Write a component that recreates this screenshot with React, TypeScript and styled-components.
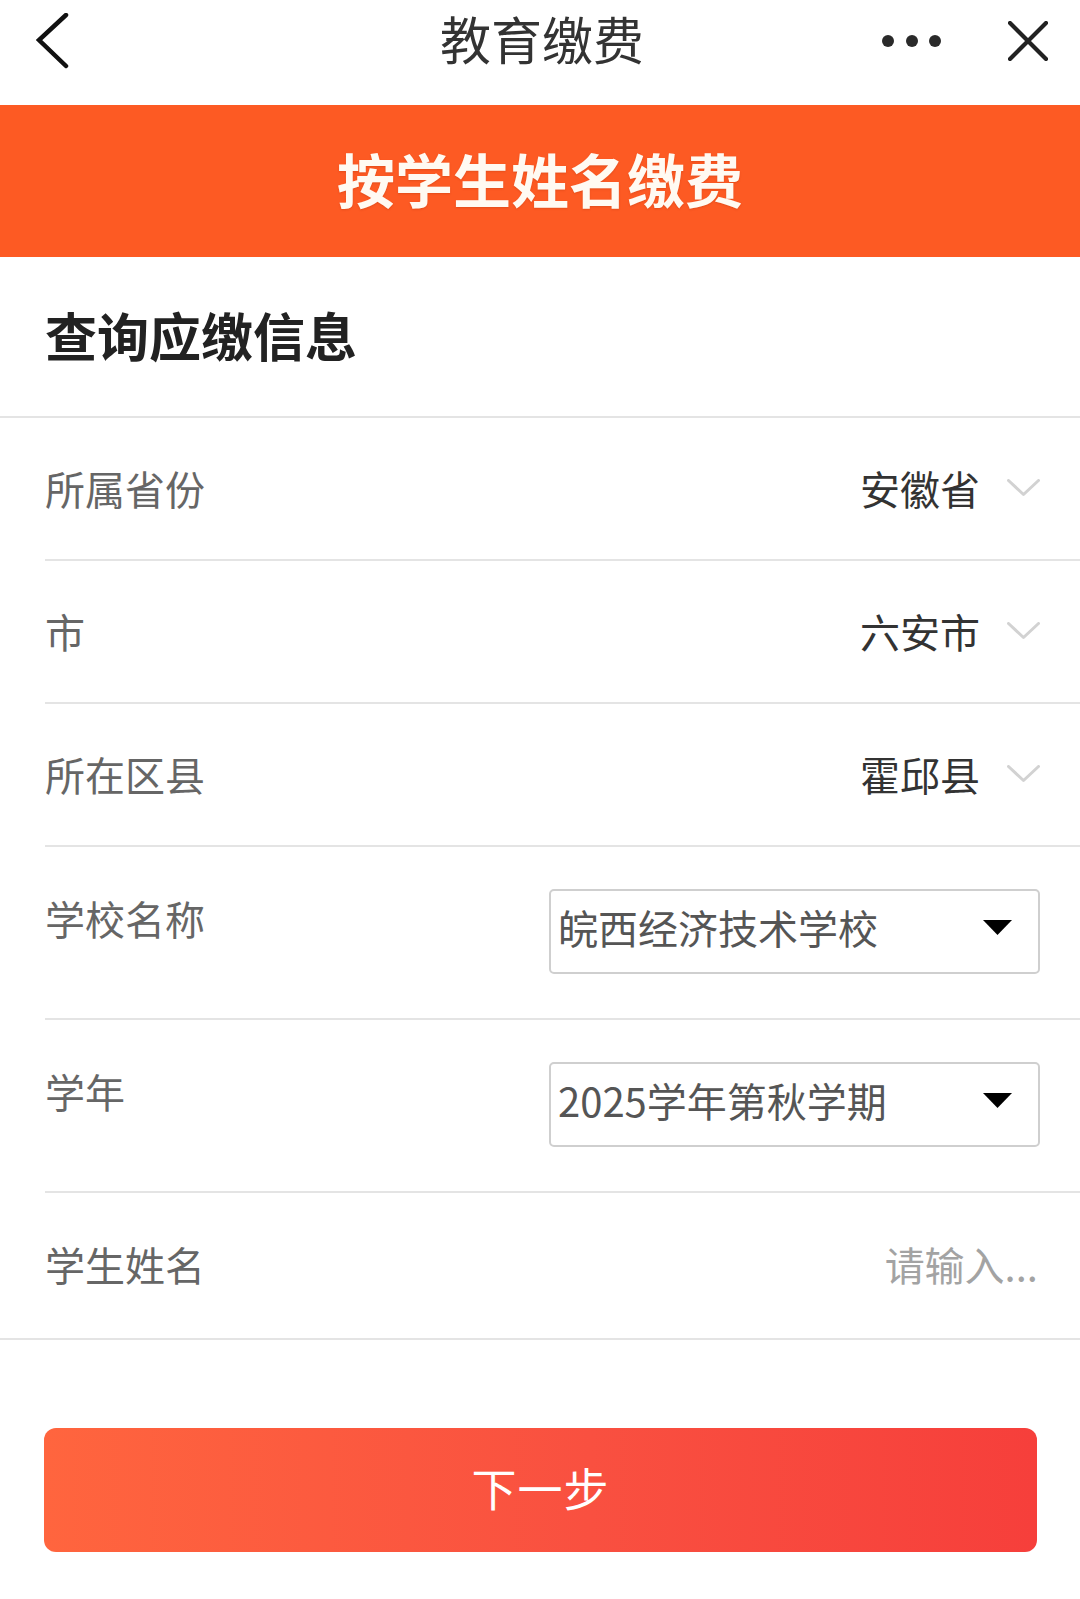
import React from "react";
import styled, { createGlobalStyle } from "styled-components";

const GlobalStyle = createGlobalStyle`
  html, body {
    margin: 0;
    padding: 0;
    background: #ffffff;
  }
  body {
    font-family: "Noto Sans CJK SC", "Noto Sans", "Liberation Sans", sans-serif;
    -webkit-font-smoothing: antialiased;
  }
  * { box-sizing: border-box; }
`;

const Page = styled.div`
  width: 1080px;
  min-height: 1599px;
  background: #ffffff;
  display: flex;
  flex-direction: column;
`;

const TopBar = styled.header`
  height: 105px;
  display: grid;
  grid-template-columns: 1fr auto 1fr;
  align-items: center;
  padding: 0 32px 0 36px;
  background: #ffffff;
`;

const Title = styled.h1`
  margin: 0;
  font-size: 51px;
  font-weight: 400;
  line-height: 1;
  color: #333333;
  letter-spacing: 0;
  transform: translateY(-14px);
`;

const LeftSlot = styled.div`
  display: flex;
  align-items: center;
  justify-self: start;
  transform: translateY(-12px);
`;

const RightSlot = styled.div`
  display: flex;
  align-items: center;
  justify-self: end;
  gap: 66px;
  transform: translateY(-12px);
`;

const IconButton = styled.button`
  border: 0;
  background: transparent;
  padding: 0;
  margin: 0;
  display: flex;
  align-items: center;
  justify-content: center;
  cursor: pointer;
`;

const Banner = styled.div`
  height: 152px;
  background: #fd5a23;
  display: flex;
  align-items: center;
  justify-content: center;
  color: #fffaf2;
  font-size: 58px;
  font-weight: 700;
  line-height: 1;
  text-shadow: 0 1px 2px rgba(150, 40, 0, 0.25);
  padding-bottom: 6px;
`;

const SectionTitle = styled.h2`
  margin: 0;
  height: 161px;
  display: flex;
  align-items: center;
  padding-left: 45px;
  padding-bottom: 4px;
  font-size: 52px;
  font-weight: 700;
  color: #222222;
  line-height: 1;
  border-bottom: 2px solid #e4e4e4;
`;

const Form = styled.div`
  display: flex;
  flex-direction: column;
  border-bottom: 2px solid #e4e4e4;
`;

const Row = styled.div<{ $last?: boolean; $tall?: boolean }>`
  margin-left: 45px;
  padding-right: 40px;
  display: flex;
  align-items: ${(p) => (p.$tall ? "flex-start" : "center")};
  justify-content: space-between;
  min-height: ${(p) => (p.$last ? "145px" : "143px")};
  padding-top: ${(p) => (p.$tall ? "42px" : "0")};
  padding-bottom: ${(p) => (p.$tall ? "44px" : p.$last ? "4px" : "2px")};
  border-bottom: ${(p) => (p.$last ? "none" : "2px solid #e4e4e4")};
`;

const Label = styled.span`
  font-size: 40px;
  line-height: 58px;
  color: #666666;
`;

const PickerValue = styled.div`
  display: flex;
  align-items: center;
  gap: 27px;
`;

const ValueText = styled.span`
  font-size: 40px;
  line-height: 58px;
  color: #333333;
`;

const SelectBox = styled.div`
  width: 491px;
  height: 85px;
  border: 2px solid #cfcfcf;
  border-radius: 5px;
  display: flex;
  align-items: center;
  justify-content: space-between;
  padding: 0 26px 0 7px;
  background: #ffffff;
`;

const SelectText = styled.span`
  font-size: 40px;
  line-height: 1;
  color: #555555;
  transform: translateY(-5px);
`;

const CaretWrap = styled.span`
  display: flex;
  transform: translateY(-4px);
`;

const Placeholder = styled.span`
  font-size: 40px;
  line-height: 58px;
  color: #a3a3a3;
  margin-right: 2px;
`;

const ButtonWrap = styled.div`
  padding: 88px 43px 0 44px;
`;

const NextButton = styled.button`
  width: 100%;
  height: 124px;
  border: 0;
  border-radius: 12px;
  background: linear-gradient(90deg, #ff653e 0%, #f95040 55%, #f63f3b 100%);
  color: #ffffff;
  font-family: "Noto Sans CJK SC", "Noto Sans", sans-serif;
  font-size: 45px;
  font-weight: 400;
  letter-spacing: 1px;
  display: flex;
  align-items: center;
  justify-content: center;
  padding-bottom: 6px;
  cursor: pointer;
`;

const BackIcon = () => (
  <svg width="36" height="56" viewBox="0 0 36 56">
    <polyline
      points="30,2 3,27 30,53"
      fill="none"
      stroke="#111"
      strokeWidth="4.5"
      strokeLinecap="round"
      strokeLinejoin="miter"
    />
  </svg>
);

const DotsIcon = () => (
  <svg width="60" height="14" viewBox="0 0 60 14">
    <circle cx="6" cy="7" r="6" fill="#2a2a2a" />
    <circle cx="30" cy="7" r="6" fill="#2a2a2a" />
    <circle cx="53" cy="7" r="6" fill="#2a2a2a" />
  </svg>
);

const CloseIcon = () => (
  <svg width="40" height="40" viewBox="0 0 40 40">
    <path
      d="M2 2 L38 38 M38 2 L2 38"
      stroke="#222"
      strokeWidth="4.2"
      strokeLinecap="round"
    />
  </svg>
);

const Chevron = () => (
  <svg width="33" height="18" viewBox="0 0 33 18">
    <polyline
      points="1.5,1.5 16.5,15.5 31.5,1.5"
      fill="none"
      stroke="#d2d2d2"
      strokeWidth="3"
      strokeLinecap="round"
      strokeLinejoin="round"
    />
  </svg>
);

const Caret = () => (
  <svg width="29" height="15" viewBox="0 0 29 15">
    <polygon points="0,0 29,0 14.5,15" fill="#000" />
  </svg>
);

type Picker = { label: string; value: string };

const pickers: Picker[] = [
  { label: "所属省份", value: "安徽省" },
  { label: "市", value: "六安市" },
  { label: "所在区县", value: "霍邱县" },
];

const selects: Picker[] = [
  { label: "学校名称", value: "皖西经济技术学校" },
  { label: "学年", value: "2025学年第秋学期" },
];

export default function App() {
  return (
    <>
      <GlobalStyle />
      <Page>
        <TopBar>
          <LeftSlot>
            <IconButton aria-label="返回">
              <BackIcon />
            </IconButton>
          </LeftSlot>
          <Title>教育缴费</Title>
          <RightSlot>
            <IconButton aria-label="更多">
              <DotsIcon />
            </IconButton>
            <IconButton aria-label="关闭">
              <CloseIcon />
            </IconButton>
          </RightSlot>
        </TopBar>
        <Banner>按学生姓名缴费</Banner>
        <SectionTitle>查询应缴信息</SectionTitle>
        <Form>
          {pickers.map((p) => (
            <Row key={p.label}>
              <Label>{p.label}</Label>
              <PickerValue>
                <ValueText>{p.value}</ValueText>
                <Chevron />
              </PickerValue>
            </Row>
          ))}
          {selects.map((s) => (
            <Row key={s.label} $tall>
              <Label>{s.label}</Label>
              <SelectBox>
                <SelectText>{s.value}</SelectText>
                <CaretWrap>
                  <Caret />
                </CaretWrap>
              </SelectBox>
            </Row>
          ))}
          <Row $last>
            <Label>学生姓名</Label>
            <Placeholder>请输入...</Placeholder>
          </Row>
        </Form>
        <ButtonWrap>
          <NextButton>下一步</NextButton>
        </ButtonWrap>
      </Page>
    </>
  );
}
